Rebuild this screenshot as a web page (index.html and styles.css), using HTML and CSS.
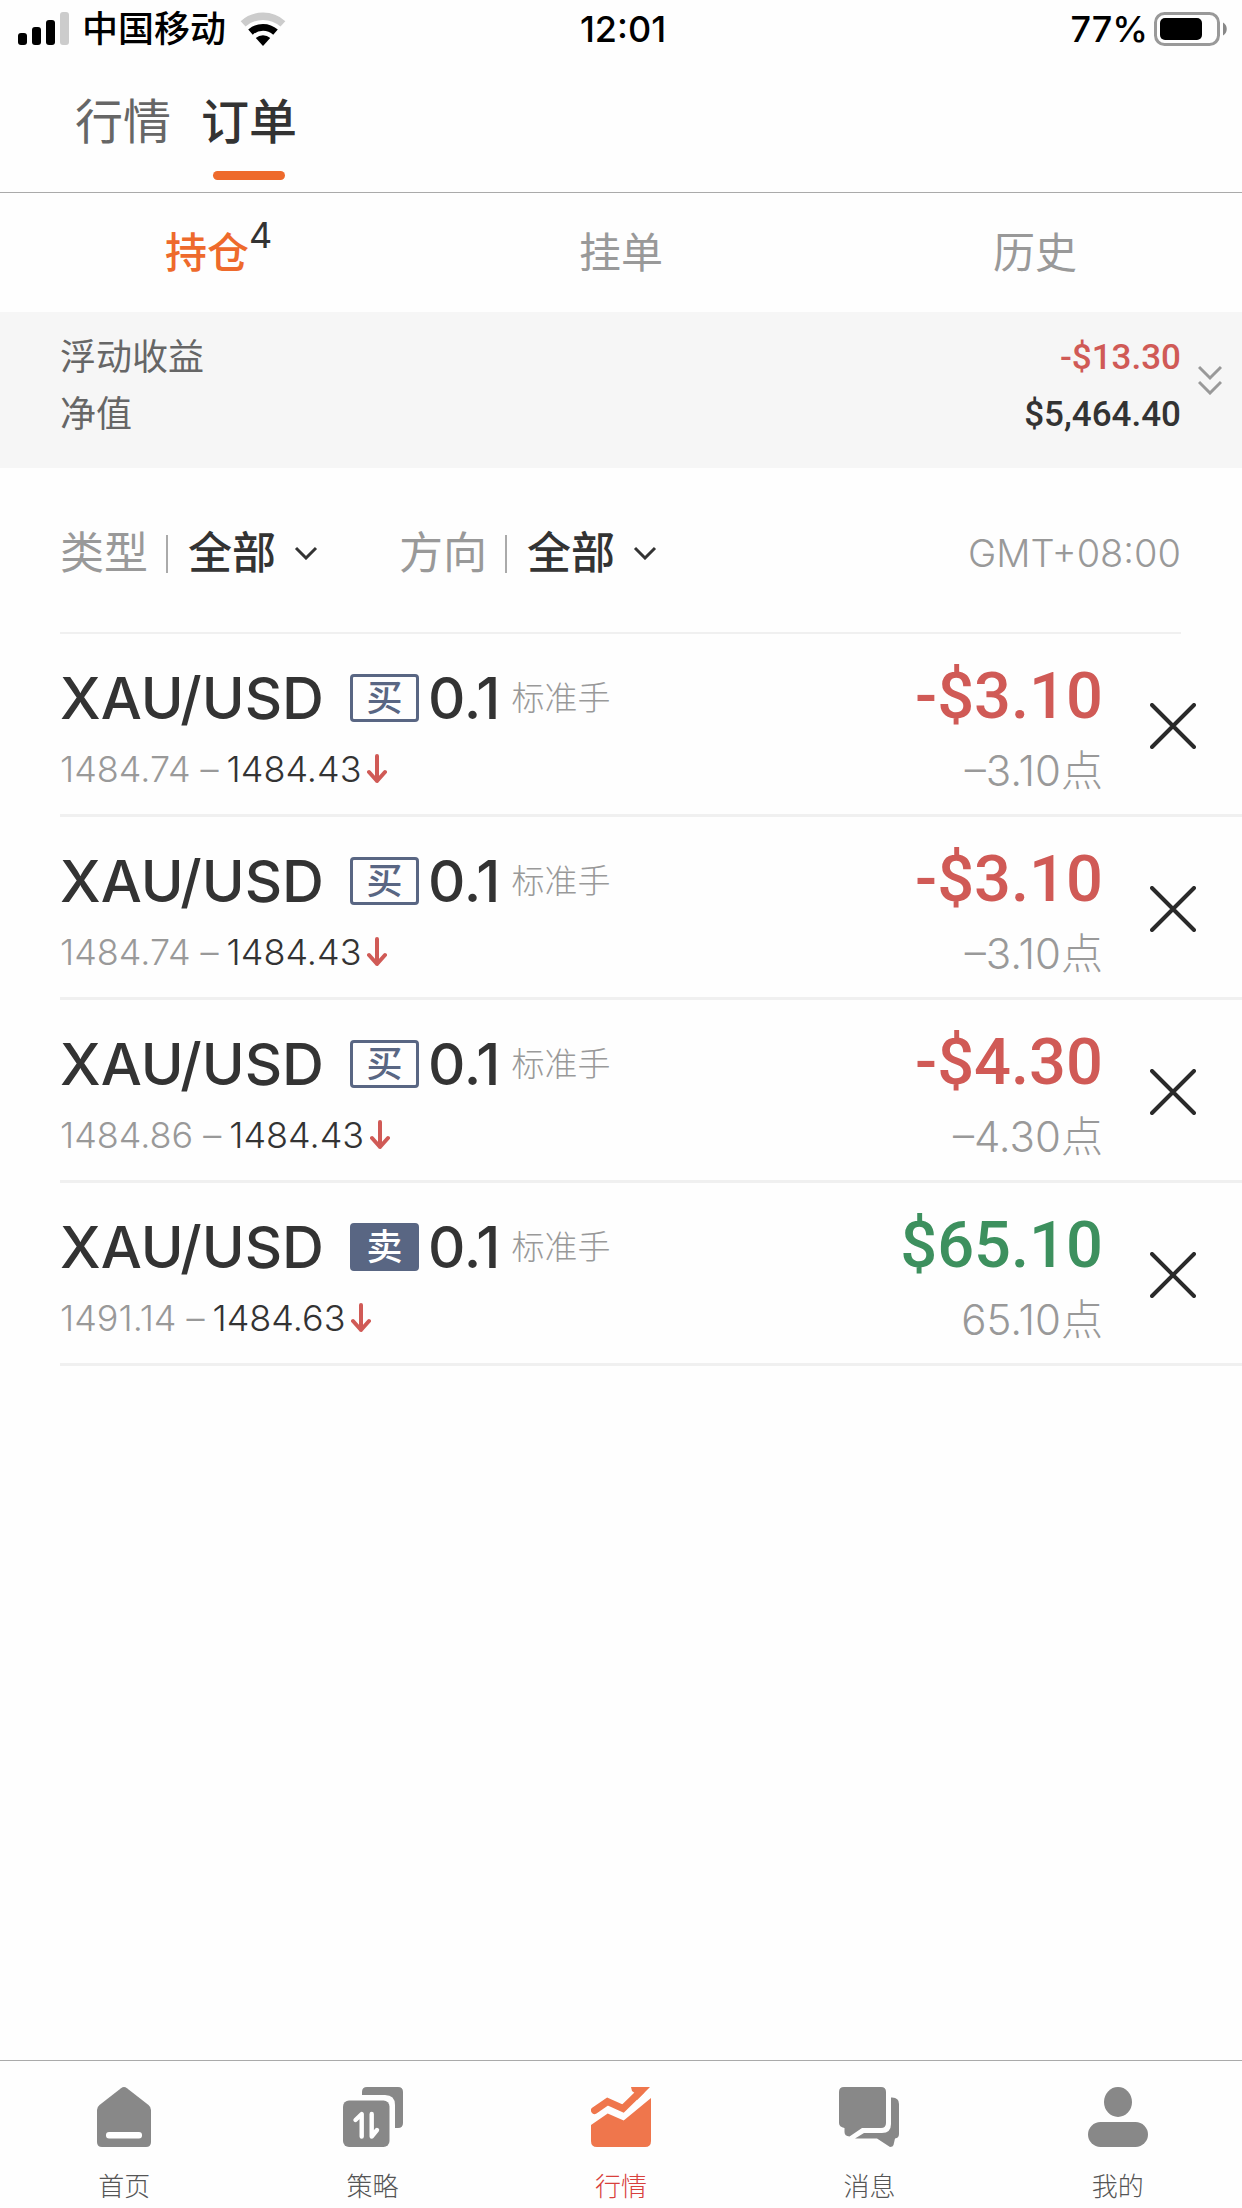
FILE: index.html
```
<!DOCTYPE html>
<html lang="zh-CN">
<head>
<meta charset="utf-8">
<meta name="viewport" content="width=device-width, initial-scale=1">
<title>订单</title>
<link rel="stylesheet" href="styles.css">
</head>
<body>
<div class="status">
  <div class="status-left">
    <svg class="signal" viewBox="0 0 52 34" aria-hidden="true">
      <rect x="0" y="21" width="9" height="12" rx="3"/>
      <rect x="14" y="15" width="9" height="18" rx="3"/>
      <rect x="28" y="8" width="9" height="25" rx="3"/>
      <rect x="42" y="0" width="9" height="33" rx="3" fill="#ccc"/>
    </svg>
    <span class="carrier">中国移动</span>
    <svg class="wifi" viewBox="0 0 46 34" aria-hidden="true" fill="none">
      <path d="M3.1 11.9A29.7 29.7 0 0 1 42.9 11.9" stroke="#ccc" stroke-width="7.3"/>
      <path d="M10.5 20.1A18.7 18.7 0 0 1 35.5 20.1" stroke="#000" stroke-width="6.8"/>
      <path d="M23 34L15.8 26A10.7 10.7 0 0 1 30.2 26Z" fill="#000"/>
    </svg>
  </div>
  <time class="clock">12:01</time>
  <div class="status-right">
    <span>77%</span>
    <svg class="battery" viewBox="0 0 74 34" aria-hidden="true">
      <rect x="1.5" y="1.5" width="63" height="31" rx="9" fill="none" stroke="#999" stroke-width="3"/>
      <rect x="6" y="6" width="42" height="22" rx="5"/>
      <path d="M69 10.500C74 13 74 21 69 23.500Z" fill="#888"/>
    </svg>
  </div>
</div>

<header class="top-tabs">
  <a class="top-tab" href="#quotes">行情</a>
  <a class="top-tab is-active" href="#orders" aria-current="page">订单</a>
</header>

<nav class="sub-tabs">
  <button class="sub-tab is-active" type="button">持仓<sup class="count">4</sup></button>
  <button class="sub-tab" type="button">挂单</button>
  <button class="sub-tab" type="button">历史</button>
</nav>

<section class="summary">
  <dl class="totals">
    <div class="total"><dt>浮动收益</dt><dd class="loss">-$13.30</dd></div>
    <div class="total"><dt>净值</dt><dd>$5,464.40</dd></div>
  </dl>
  <button class="expand" type="button" aria-label="展开">
    <svg viewBox="0 0 24 30" fill="none" stroke="#999" stroke-width="3"><path d="M1 2L12 13L23 2M1 17L12 28L23 17"/></svg>
  </button>
</section>

<main>
  <form class="filters">
    <div class="filter">
      <label for="type">类型</label>
      <select id="type"><option>全部</option></select>
      <svg class="chevron" viewBox="0 0 24 14" aria-hidden="true"><path d="M2 2L12 12L22 2"/></svg>
    </div>
    <div class="filter">
      <label for="side">方向</label>
      <select id="side"><option>全部</option></select>
      <svg class="chevron" viewBox="0 0 24 14" aria-hidden="true"><path d="M2 2L12 12L22 2"/></svg>
    </div>
    <span class="zone">GMT+08:00</span>
  </form>

  <ul class="orders">
    <li class="order">
      <div class="info">
        <div class="title"><span class="symbol">XAU/USD</span><span class="badge">买</span><span class="lots">0.1</span><span class="unit">标准手</span></div>
        <div class="prices">1484.74<span class="dash">–</span><span class="now">1484.43</span><svg class="down" viewBox="0 0 20 30" aria-hidden="true"><path d="M10 2V27M2 18L10 27L18 18"/></svg></div>
      </div>
      <div class="result"><span class="amount loss">-$3.10</span><span class="points">–3.10点</span></div>
      <button class="close" type="button" aria-label="平仓"><svg viewBox="0 0 46 46"><path d="M2 2L44 44M44 2L2 44"/></svg></button>
    </li>
    <li class="order">
      <div class="info">
        <div class="title"><span class="symbol">XAU/USD</span><span class="badge">买</span><span class="lots">0.1</span><span class="unit">标准手</span></div>
        <div class="prices">1484.74<span class="dash">–</span><span class="now">1484.43</span><svg class="down" viewBox="0 0 20 30" aria-hidden="true"><path d="M10 2V27M2 18L10 27L18 18"/></svg></div>
      </div>
      <div class="result"><span class="amount loss">-$3.10</span><span class="points">–3.10点</span></div>
      <button class="close" type="button" aria-label="平仓"><svg viewBox="0 0 46 46"><path d="M2 2L44 44M44 2L2 44"/></svg></button>
    </li>
    <li class="order">
      <div class="info">
        <div class="title"><span class="symbol">XAU/USD</span><span class="badge">买</span><span class="lots">0.1</span><span class="unit">标准手</span></div>
        <div class="prices">1484.86<span class="dash">–</span><span class="now">1484.43</span><svg class="down" viewBox="0 0 20 30" aria-hidden="true"><path d="M10 2V27M2 18L10 27L18 18"/></svg></div>
      </div>
      <div class="result"><span class="amount loss">-$4.30</span><span class="points">–4.30点</span></div>
      <button class="close" type="button" aria-label="平仓"><svg viewBox="0 0 46 46"><path d="M2 2L44 44M44 2L2 44"/></svg></button>
    </li>
    <li class="order">
      <div class="info">
        <div class="title"><span class="symbol">XAU/USD</span><span class="badge is-sell">卖</span><span class="lots">0.1</span><span class="unit">标准手</span></div>
        <div class="prices">1491.14<span class="dash">–</span><span class="now">1484.63</span><svg class="down" viewBox="0 0 20 30" aria-hidden="true"><path d="M10 2V27M2 18L10 27L18 18"/></svg></div>
      </div>
      <div class="result"><span class="amount gain">$65.10</span><span class="points">65.10点</span></div>
      <button class="close" type="button" aria-label="平仓"><svg viewBox="0 0 46 46"><path d="M2 2L44 44M44 2L2 44"/></svg></button>
    </li>
  </ul>
</main>

<nav class="tab-bar">
  <a class="tab" href="#home">
    <svg viewBox="0 0 60 60" aria-hidden="true"><path d="M27 1.200Q30-1 33 1.200L54.500 18Q57 20 57 23V55Q57 60 52 60H8Q3 60 3 55V23Q3 20 5.500 18Z"/><rect x="12" y="45" width="36" height="6.500" rx="3" fill="#fff"/></svg>
    <span>首页</span>
  </a>
  <a class="tab" href="#strategy">
    <svg viewBox="0 0 60 60" aria-hidden="true"><path d="M19 8V5Q19 0 24 0H55Q60 0 60 5V36Q60 41 55 41H52V18Q52 8 42 8Z"/><rect y="13.500" width="46.500" height="46.500" rx="6"/><path d="M12.500 33L18.700 27V49.500M28.700 27V49.500L34 43" fill="none" stroke="#fff" stroke-width="4.400" stroke-linecap="round" stroke-linejoin="round"/></svg>
    <span>策略</span>
  </a>
  <a class="tab is-active" href="#quotes">
    <svg viewBox="0 0 60 60" aria-hidden="true"><path d="M3.500 23.500L16.500 14.500L32 21.500L50 4" fill="none" stroke="currentColor" stroke-width="7" stroke-linecap="round"/><path d="M40 0H59L46 13L45 7L41 4Z"/><path d="M0 38L16.700 26.500L32.700 33.500L60 11V54Q60 60 54 60H6Q0 60 0 54Z"/></svg>
    <span>行情</span>
  </a>
  <a class="tab" href="#messages">
    <svg viewBox="0 0 60 60" aria-hidden="true"><path d="M5 0H42Q47 0 47 5V36Q47 41 42 41H23L10.500 49.500Q5.500 49 5.500 45V41Q0 40 0 36V5Q0 0 5 0Z"/><path d="M52 10.500Q60 10 60 17V47Q60 51 56 51.500L54.500 58Q54 60 51 60L38 51.500H16L25 46H43Q52 46 52 37Z"/></svg>
    <span>消息</span>
  </a>
  <a class="tab" href="#me">
    <svg viewBox="0 0 60 60" aria-hidden="true"><ellipse cx="30" cy="15" rx="14" ry="15"/><rect y="35" width="60" height="25" rx="12.500"/></svg>
    <span>我的</span>
  </a>
</nav>
</body>
</html>
```
FILE: styles.css
```
:root {
  --ink: #333;
  --muted: #999;
  --line: #f0f0f0;
  --orange: #ee6a2c;
  --red: #d05a56;
  --green: #3d905e;
  --slate: #596683;
  --sans: Inter, "Noto Sans CJK SC", sans-serif;
  --figures: Roboto, "Noto Sans CJK SC", sans-serif;
}

* { box-sizing: border-box; }

body {
  margin: 0;
  min-height: 100vh;
  display: flex;
  flex-direction: column;
  background: #fefefe;
  color: var(--ink);
  font-family: var(--sans);
  font-size: 36px;
}

a { color: inherit; text-decoration: none; }

button, select {
  margin: 0;
  padding: 0;
  border: 0;
  background: none;
  color: inherit;
  font: inherit;
}

svg { display: block; flex: none; }

/* Status bar */
.status {
  display: grid;
  grid-template-columns: 1fr auto 1fr;
  align-items: center;
  height: 58px;
  padding: 0 14px 0 18px;
  color: #000;
  font-weight: 500;
}
.status-left, .status-right { display: flex; align-items: center; }
.status-right { justify-content: flex-end; gap: 6px; }
.signal { width: 52px; height: 34px; }
.carrier { margin: 0 14px 0 12px; line-height: 52px; }
.wifi { width: 46px; height: 34px; }
.battery { width: 74px; height: 34px; }

/* Page tabs */
.top-tabs {
  display: flex;
  gap: 30px;
  height: 135px;
  padding: 28px 75px 12px;
  border-bottom: 1px solid #aaa;
  font-size: 48px;
  line-height: 72px;
}
.top-tab {
  display: flex;
  flex-direction: column;
  justify-content: space-between;
  align-items: center;
  color: #666;
}
.top-tab.is-active { color: var(--ink); font-weight: 500; }
.top-tab.is-active::after {
  content: "";
  width: 72px;
  height: 9px;
  border-radius: 5px;
  background: var(--orange);
}

.sub-tabs {
  display: grid;
  grid-template-columns: repeat(3, 1fr);
  height: 119px;
  padding-bottom: 6px;
}
.sub-tab { position: relative; color: var(--muted); font-size: 42px; }
.sub-tab.is-active { color: var(--orange); font-weight: 500; }
.count {
  position: absolute;
  top: 20px;
  left: calc(50% + 42px);
  color: var(--ink);
  font-size: 36px;
  font-weight: 400;
  line-height: 44px;
}

/* Account summary */
.summary { display: flex; background: #f6f6f6; }
.totals { flex: 1; margin: 0; padding: 17px 0 25px 60px; }
.total { display: flex; justify-content: space-between; line-height: 57px; }
.total dt { color: #666; }
.total dd { margin: 0; font-family: var(--figures); font-size: 35px; font-weight: 500; }
.expand { display: flex; justify-content: center; align-items: center; width: 61px; padding: 0 4px 20px 0; }
.expand svg { width: 24px; height: 30px; }

.loss { color: var(--red); }
.gain { color: var(--green); }

/* Filters */
.filters {
  display: flex;
  align-items: center;
  gap: 81px;
  height: 166px;
  margin: 0 61px 0 60px;
  padding-top: 5px;
  border-bottom: 2px solid var(--line);
  font-size: 44px;
}
.filter { display: flex; align-items: center; }
.filter label { color: var(--muted); line-height: 64px; }
.filter label::after {
  content: "";
  display: inline-block;
  width: 2px;
  height: 38px;
  margin: 0 20px 0 18px;
  background: #aaa;
  vertical-align: -4px;
}
.filter select {
  appearance: none;
  width: 88px;
  height: 64px;
  font-weight: 500;
  line-height: 64px;
}
.chevron { width: 24px; height: 14px; margin-left: 18px; fill: none; stroke: var(--ink); stroke-width: 3; }
.zone { margin-left: auto; color: var(--muted); font-size: 38px; font-weight: 300; }

/* Orders */
.orders { margin: 0 0 0 60px; padding: 0; list-style: none; }
.order { display: flex; height: 183px; border-bottom: 3px solid var(--line); }
.info { flex: 1; padding-top: 29px; }
.title { display: flex; align-items: center; height: 70px; font-size: 58px; font-weight: 500; line-height: 70px; }
.badge {
  width: 69px;
  height: 48px;
  margin: 0 9px 0 26px;
  border: 3px solid var(--slate);
  border-radius: 4px;
  color: var(--slate);
  font-size: 36px;
  line-height: 42px;
  text-align: center;
}
.badge.is-sell { background: var(--slate); color: #fff; }
.unit { margin-left: 11px; color: var(--muted); font-size: 33px; font-weight: 300; }
.prices {
  display: flex;
  align-items: center;
  height: 48px;
  margin-top: 12px;
  color: var(--muted);
  font-size: 36px;
  font-weight: 300;
}
.dash { margin: 0 8px 0 10px; }
.now { color: var(--ink); }
.down { width: 20px; height: 30px; margin-left: 6px; fill: none; stroke: var(--red); stroke-width: 4; stroke-linecap: round; stroke-linejoin: round; }
.result { display: flex; flex-direction: column; align-items: flex-end; padding-top: 27px; }
.amount { font-family: var(--figures); font-size: 65px; font-weight: 500; line-height: 70px; }
.points { margin-top: 16px; color: var(--muted); font-size: 42px; font-weight: 300; line-height: 48px; }
.close { display: flex; justify-content: center; align-items: center; width: 139px; padding-top: 4px; }
.close svg { width: 46px; height: 46px; fill: none; stroke: #2a2a2a; stroke-width: 4; stroke-linecap: round; }

/* Bottom navigation */
.tab-bar {
  display: grid;
  grid-template-columns: repeat(5, 1fr);
  margin-top: auto;
  border-top: 1px solid #aaa;
}
.tab {
  display: flex;
  flex-direction: column;
  align-items: center;
  gap: 20px;
  padding: 26px 0 1px;
  color: #555;
  font-size: 26px;
  font-weight: 300;
  line-height: 40px;
}
.tab svg { width: 60px; height: 60px; color: #888; fill: currentColor; }
.tab.is-active { color: #d8403c; }
.tab.is-active svg { color: #ef764c; }
```
